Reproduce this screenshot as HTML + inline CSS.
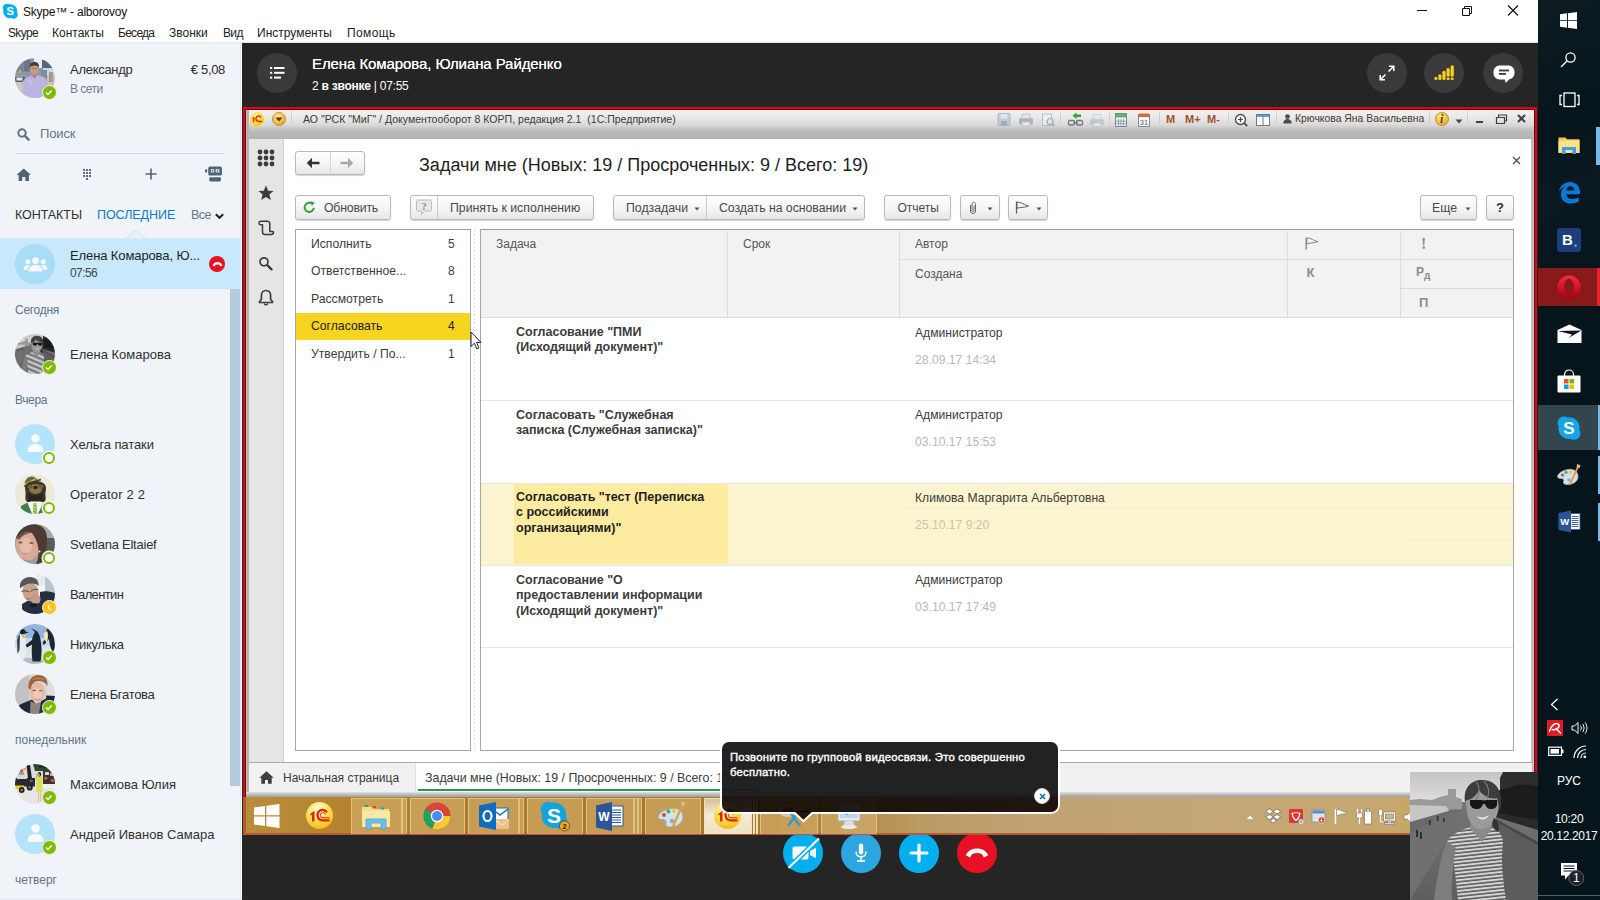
<!DOCTYPE html>
<html lang="ru">
<head>
<meta charset="utf-8">
<title>Skype</title>
<style>
*{box-sizing:border-box;margin:0;padding:0}
html,body{width:1600px;height:900px;overflow:hidden;background:#252525;font-family:"Liberation Sans",sans-serif;}
#root{position:relative;width:1600px;height:900px;overflow:hidden}
.a{position:absolute}
.t{position:absolute;white-space:nowrap;line-height:16px;font-size:13px;color:#2b2b2b}
svg{position:absolute;overflow:visible}
/* ---------- skype chrome ---------- */
#titlebar{left:0;top:0;width:1538px;height:43px;background:#fff;border-bottom:1px solid #dfe8ef}
#sidebar{left:0;top:43px;width:242px;height:857px;background:#f0f4f8;border-right:1px solid #fff}
#sidebar:after{content:"";position:absolute;left:240px;top:0;width:1px;height:857px;background:#dce8f2}
#sbw{left:0;top:1px;width:240px;height:856px}
.ck{margin-top:-1px}
.sec{font-size:12px;color:#5f7488;left:15px}
.nm{left:70px;font-size:13px;color:#303030}
.av{position:absolute;left:15px;margin-top:-1px;width:40px;height:40px;border-radius:50%;overflow:hidden}
.bd{position:absolute;margin-top:-2px;left:41.500px;width:15px;height:15px;border-radius:50%;background:#7fba00;border:1.5px solid #f0f4f8}
.bd.o{background:#fff;border:2px solid #7fba00;box-shadow:0 0 0 1.500px #f0f4f8;width:12px;height:12px;left:43px;margin-top:-.5px}
.avs{margin-top:0}
.bd.y{background:#fcc21b}
/* ---------- call area ---------- */
#call{left:242px;top:43px;width:1296px;height:857px;background:#252525}
.cb{position:absolute;width:40px;height:40px;border-radius:50%;background:#3a3a3a}
/* ---------- 1C ---------- */
#share{left:243px;top:107px;width:1294px;height:728px;background:#db0613}
#share2{left:245px;top:109px;width:1290px;height:724px;background:#5e0a12}
#onec{left:246px;top:110px;width:1288px;height:723px;background:#fff}
.btn{position:absolute;height:25px;top:195px;border:1px solid #b9b9b9;border-radius:3px;background:linear-gradient(#ffffff,#f3f3f3 60%,#e6e6e6);box-shadow:0 1px 1px rgba(0,0,0,.18);font-size:12px;color:#4a4a4a;line-height:23px;white-space:nowrap}
.c1{font-size:12px;color:#3c3c3c}
.au{font-size:12.150px;color:#3c3c3c}
.hd{font-size:12px;color:#555}
.dt{font-size:12.150px;color:#b9b9b9}
.tk{font-size:12.500px;font-weight:bold;color:#3b3b3b;line-height:15.300px;white-space:normal}
.tbx{top:798px;height:36px;background:rgba(214,178,112,.62);border:1px solid rgba(232,206,150,.75);border-bottom-color:rgba(226,150,110,.8)}
/* ---------- win taskbar ---------- */
#wtb{left:1538px;top:0;width:62px;height:900px;background:#06151b}
</style>
</head>
<body>
<div id="root">
<svg width="0" height="0" style="left:0;top:0"><defs><clipPath id="cc"><circle cx="20" cy="20" r="20"/></clipPath><filter id="bl" x="-5%" y="-5%" width="110%" height="110%"><feGaussianBlur stdDeviation=".45"/></filter></defs></svg>

<!-- ================= SKYPE TITLE + MENU ================= -->
<div id="titlebar" class="a">
  <svg style="left:2px;top:2.500px" width="16.500" height="17" viewBox="0 0 16 17" preserveAspectRatio="none"><path d="M8 1.2c3.8 0 6.8 3 6.8 6.8 0 .5 0 1-.2 1.400.5.700.700 1.500.700 2.300 0 2.200-1.800 4-4 4-.8 0-1.500-.2-2.100-.6-.4.100-.8.100-1.200.100-3.800 0-6.800-3-6.800-6.800 0-.5 0-1 .2-1.400C.9 6.300.700 5.500.700 4.700c0-2.200 1.800-4 4-4 .8 0 1.500.2 2.100.6.400-.1.800-.1 1.200-.1z" fill="#00aff0"/><text x="8" y="12.300" font-family="Liberation Sans" font-weight="bold" font-size="11" fill="#fff" text-anchor="middle">S</text></svg>
  <div class="t" style="left:23px;top:4px;font-size:12px;color:#111;letter-spacing:-.23px">Skype™ - alborovoy</div>
  <!-- window controls -->
  <svg style="left:1416px;top:4px" width="110" height="14" viewBox="0 0 110 14" fill="none" stroke="#111" stroke-width="1"><path d="M1 6.500h10"/><path d="M46.500 4.500h7v7h-7zM48.500 4.500v-2h7v7h-2"/><path d="M92 1.500l10 10M102 1.500l-10 10" stroke-width="1.200"/></svg>
  <div class="t" style="left:8px;top:25px;font-size:12px;color:#222;letter-spacing:-.68px">Skype</div>
  <div class="t" style="left:52px;top:25px;font-size:12px;color:#222">Контакты</div>
  <div class="t" style="left:118px;top:25px;font-size:12px;color:#222;letter-spacing:-.72px">Беседа</div>
  <div class="t" style="left:169px;top:25px;font-size:12px;color:#222">Звонки</div>
  <div class="t" style="left:223px;top:25px;font-size:12px;color:#222;letter-spacing:-.65px">Вид</div>
  <div class="t" style="left:257px;top:25px;font-size:12px;color:#222">Инструменты</div>
  <div class="t" style="left:347px;top:25px;font-size:12px;color:#222;letter-spacing:.4px">Помощь</div>
</div>

<!-- ================= LEFT SIDEBAR ================= -->
<div id="sidebar" class="a"><div id="sbw" class="a">
<!-- profile (coords relative to sidebar top=43) -->
<svg class="avs" style="left:15px;top:14px" width="40" height="40" viewBox="0 0 40 40"><g clip-path="url(#cc)"><g filter="url(#bl)"><rect width="40" height="40" fill="#8e9aaa"/>
<path d="M0 0h16v14H0z" fill="#7c8898"/><path d="M9 2h7v11H9z" fill="#6a768a"/>
<path d="M19 0h8.500v10H19z" fill="#e2f1fa"/><path d="M27 2h10v8H27z" fill="#56667e"/>
<path d="M28 10h12v9H28z" fill="#c6dbea"/><path d="M26 12h6v8h-6z" fill="#7f8c9c"/>
<path d="M0 19h10v6H0z" fill="#5a6068"/><path d="M1.500 19.500h6v3h-6z" fill="#e4e8ec"/><rect x="4" y="12" width="2" height="3" fill="#d8b040"/>
<path d="M0 24h12v16H0z" fill="#cfc6b8"/><path d="M32 17h8v12h-8z" fill="#c9c0b6"/><path d="M34 14h4v10h-4z" fill="#a89888"/>
<path d="M7.500 40V25c.5-3 2.500-5 5.500-6l5-2 1.600 3.500L22 17l5 1.500c3.500 1 5 3.500 6 8.500V40z" fill="#bab4e0"/>
<path d="M13 22l4 5M14 21l4 5" stroke="#d8d4f0" stroke-width=".7"/>
<path d="M17 15.500h4.800l.2 2-2.400 3.500-2.600-3.500z" fill="#b48670"/>
<ellipse cx="19.200" cy="11" rx="4.400" ry="5.600" fill="#c69c86"/>
<path d="M14.600 10c-.4-4 2-6 5-6s5 2 4.400 6c-.8-2-2-2.600-4.400-2.600S15.500 8 14.600 10z" fill="#493a30"/>
<path d="M16.500 10.500h5.500" stroke="#8a6a5a" stroke-width=".7"/></g></g></svg>
<div class="bd" style="top:43px"></div>
<svg class="ck" style="left:45px;top:46px" width="8" height="7" viewBox="0 0 8 7"><path d="M1 3.500l2 2 3.600-4" fill="none" stroke="#fff" stroke-width="1.400"/></svg>
<div class="t nm" style="top:18px;letter-spacing:-.28px">Александр</div>
<div class="t" style="left:70px;top:37px;font-size:12px;color:#6a7d90;letter-spacing:-.5px">В сети</div>
<div class="t" style="left:150px;width:75px;text-align:right;top:18px;color:#2a2a2a;letter-spacing:-.33px">€ 5,08</div>
<!-- search -->
<svg style="left:16.500px;top:83.500px" width="13" height="13" viewBox="0 0 13 13"><circle cx="5" cy="5" r="3.700" fill="none" stroke="#5d7286" stroke-width="2"/><path d="M7.900 7.900l3.700 3.700" stroke="#5d7286" stroke-width="2.500" stroke-linecap="round"/></svg>
<div class="t" style="left:40px;top:82px;color:#64778a;letter-spacing:-.15px">Поиск</div>
<div class="a" style="left:15px;top:109px;width:210px;height:1px;background:#c9dbe8"></div>
<!-- icon row y=174 abs => 131 rel -->
<svg style="left:15.500px;top:124px" width="15.500" height="14" viewBox="0 0 15 14" preserveAspectRatio="none"><path d="M7.500 0.500L0.500 7h2v6h3.500V9h3v4h3.500V7h2z" fill="#4f6479"/></svg>
<svg style="left:83px;top:125px" width="10" height="13" viewBox="0 0 10 13" fill="#5a6f84"><g><rect x="0" y="0" width="2" height="2"/><rect x="3" y="0" width="2" height="2"/><rect x="6" y="0" width="2" height="2"/><rect x="0" y="3" width="2" height="2"/><rect x="3" y="3" width="2" height="2"/><rect x="6" y="3" width="2" height="2"/><rect x="0" y="6" width="2" height="2"/><rect x="3" y="6" width="2" height="2"/><rect x="6" y="6" width="2" height="2"/><rect x="3" y="9" width="2" height="2"/></g></svg>
<svg style="left:145px;top:124px" width="12" height="12" viewBox="0 0 12 12"><path d="M6 0.500v11M0.500 6h11" stroke="#4f6479" stroke-width="1.600"/></svg>
<svg style="left:204px;top:122px" width="19" height="16" viewBox="0 0 18 15"><rect x="4" y="0.500" width="13" height="8.500" rx="1.500" fill="#4f6479"/><rect x="6.500" y="3" width="3" height="3" fill="#f0f4f8"/><rect x="11" y="3" width="3.500" height="3" fill="#f0f4f8"/><circle cx="8" cy="4.500" r=".8" fill="#4f6479"/><circle cx="12.800" cy="4.500" r=".8" fill="#4f6479"/><rect x="1" y="3" width="2" height="3" fill="#4f6479"/><rect x="5" y="10.500" width="11" height="4" rx="1" fill="#4f6479"/></svg>
<!-- tabs y=214 abs => 171 -->
<div class="t" style="left:15px;top:163px;font-size:12.500px;color:#2f2f2f;letter-spacing:-.07px">КОНТАКТЫ</div>
<div class="t" style="left:97px;top:163px;font-size:12.500px;color:#0a7bc6;letter-spacing:-.05px">ПОСЛЕДНИЕ</div>
<div class="t" style="left:191px;top:163px;font-size:12.500px;color:#62768a;letter-spacing:-.5px">Все</div>
<svg style="left:214.500px;top:168.500px" width="9" height="7" viewBox="0 0 9 7"><path d="M0.800 1.200l3.700 3.600L8.200 1.200" fill="none" stroke="#222" stroke-width="2"/></svg>
<!-- selected conversation: abs y 238-288 => rel 195-245 -->
<svg style="left:120px;top:185.500px" width="31" height="9" viewBox="0 0 31 9"><path d="M0 9C9 9 11.500 1 15.500 1S22 9 31 9z" fill="#e9f1f7" stroke="#d3e3ee" stroke-width="1"/></svg>
<div class="a" style="left:0;top:194px;width:240px;height:51px;background:#c7e9fb;border-top:1px solid #d4ecfa"></div>
<div class="av" style="top:201px;background:#a8dcf7"></div>
<svg style="left:23px;top:213px" width="25" height="15" viewBox="0 0 25 15" fill="#f4fbff"><circle cx="12.500" cy="3.600" r="3.400"/><path d="M5.500 14.500c0-4.500 3-6.500 7-6.500s7 2 7 6.500z"/><circle cx="4.800" cy="4.800" r="2.500"/><path d="M0.500 13c0-3.500 1.800-5 4.300-5 .9 0 1.600.2 2.200.5-1.700 1.200-2.400 2.800-2.500 4.500z"/><circle cx="20.200" cy="4.800" r="2.500"/><path d="M24.500 13c0-3.500-1.800-5-4.300-5-.9 0-1.600.2-2.200.5 1.700 1.200 2.400 2.800 2.500 4.500z"/></svg>
<div class="t nm" style="top:204px;color:#1f1f1f;letter-spacing:-.11px">Елена Комарова, Ю...</div>
<div class="t" style="left:70px;top:221px;font-size:12px;color:#3d4852;letter-spacing:-.6px">07:56</div>
<div class="a" style="left:209px;top:212px;width:16px;height:16px;border-radius:50%;background:#e81123"></div>
<svg style="left:211.500px;top:216.500px" width="11" height="6.600" viewBox="0 0 10 6"><path d="M0.500 4.200C1.500 1.800 3.200 1 5 1s3.500.8 4.500 3.200l-1.800.9-.9-1.600C6.200 3.300 5.600 3.200 5 3.200s-1.200.1-1.800.3l-.9 1.600z" fill="#fff"/></svg>
<!-- scrollbar -->
<div class="a" style="left:230px;top:245px;width:10px;height:497px;background:#b4cbdd"></div>

<div class="t sec" style="top:258px;letter-spacing:-.29px">Сегодня</div>
<svg class="avs" style="left:15px;top:290px" width="40" height="40" viewBox="0 0 40 40"><g clip-path="url(#cc)"><g transform="translate(-3 -1) scale(.345)" filter="url(#bl2)"><rect width="128" height="128" fill="url(#pv)"/>
 <rect width="128" height="30" fill="url(#sky)"/>
 <path d="M0 28l10-1 12 1 8-3 8-2v-6h8v8l6 2v10L0 40z" fill="#9a9a9a"/>
 <path d="M0 33l36 1 4 6-40 12z" fill="#c6c6c6"/>
 <path d="M0 50l42-12 10 0-52 30z" fill="#6a6a6a"/>
 <path d="M0 62l40-22h14L0 128z" fill="#6f6f6f"/>
 <path d="M93 0h35v22H90V6z" fill="#2e2e2e"/>
 <path d="M86 20c6-4 12-2 16-6 6-2 16-2 26 0v40l-42-12z" fill="#1d1d1d"/>
 <path d="M82 40l46 8v10l-46-14z" fill="#2a2a2a"/>
 <path d="M80 44l48 26v58H70z" fill="#5b5b5b"/>
 <path d="M84 46l44 24v3L83 48z" fill="#484848"/>
 <g fill="#2e2e2e"><rect x="6" y="58" width="2" height="7"/><rect x="10" y="60" width="2" height="7"/><rect x="19" y="48" width="1.600" height="5"/><rect x="27" y="44" width="1.500" height="5"/><rect x="33" y="46" width="1.500" height="4"/><rect x="94" y="41" width="1.600" height="5"/><rect x="99" y="42" width="1.600" height="5"/></g>
 <!-- woman -->
 <path d="M48 128c-2-20-4-40-8-54l-3-5c4-6 12-10 20-13l18-4 12 6c4 3 6 8 6 14-2 14-1 30 3 56z" fill="url(#st)"/>
 <path d="M37 69l9 7c-3 14-5 34-4 52H24c3-20 6-44 13-59z" fill="#7e7e7e"/>
 <path d="M62 44h18l2 12-10 14-12-14z" fill="#8a8a8a"/>
 <path d="M57 18c4-8 18-12 27-4 5 6 6 16 4 26l-3 8c-3 6-9 9-14 9-7 0-12-6-14-16-1-8-2-16 0-23z" fill="#9a9a9a"/>
 <path d="M55 30c-2-14 6-22 17-22 12 0 20 8 19 24l-1 8-3-14c-6 2-14-2-18-8-3 6-8 10-12 10z" fill="#3c3c3c"/>
 <path d="M66 10c4 4 4 12 0 18M74 9c5 5 6 12 3 18" stroke="#777" stroke-width="1.200" fill="none"/>
 <path d="M84 46c4 3 6 8 4 14-3-1-5-5-6-9z" fill="#333"/>
 <path d="M60 28h11c1 0 2 .5 3 .5s2-.5 3-.5h10v5c-1 3-3 4-6 4-3 0-5-2-6-5h-2c-1 3-3 5-6 5-4 0-6-2-7-5z" fill="#121212"/>
 <path d="M67 44c3 2 8 2 12-1-1 3-4 4.500-6.500 4.500S68 46 67 44z" fill="#e2e2e2"/></g></g></svg>
<div class="bd" style="top:318px"></div>
<svg class="ck" style="left:45px;top:321px" width="8" height="7" viewBox="0 0 8 7"><path d="M1 3.500l2 2 3.600-4" fill="none" stroke="#fff" stroke-width="1.400"/></svg>
<div class="t nm" style="top:303px">Елена Комарова</div>

<div class="t sec" style="top:348px;letter-spacing:-.38px">Вчера</div>
<div class="av" style="top:381px;background:#b5e3fa"></div>
<svg style="left:27px;top:390px" width="17" height="20" viewBox="0 0 17 20" fill="#f6fcff"><circle cx="8.500" cy="4.500" r="4.200"/><path d="M0.500 18c0-6 3.500-8 8-8s8 2 8 8z"/></svg>
<div class="bd o" style="top:408px"></div>
<div class="t nm" style="top:393px;letter-spacing:-.1px">Хельга патаки</div>

<svg class="avs" style="left:15px;top:430px" width="40" height="40" viewBox="0 0 40 40"><g clip-path="url(#cc)"><g filter="url(#bl)"><rect width="40" height="40" fill="#ece9d6"/>
<path d="M9.500 9.500c1-5 5-8 9.500-6.500 3 1 4 3 4 5z" fill="#6c6648"/>
<path d="M8.500 11.500L25.500 4.500l.8 1.800L9.500 13z" fill="#5a543c"/>
<path d="M10.500 10.200L20.500 5" stroke="#a8d428" stroke-width="1.500"/>
<path d="M10 13c0-3 4-6 10.500-6S31 10 31 14c0 3-1 5-.5 8s0 6-2 6H13c-2 0-3-3-2.500-6s-.5-6-.5-9z" fill="#3c3428"/>
<ellipse cx="20.500" cy="15" rx="6.500" ry="5" fill="#8a7448"/><ellipse cx="15" cy="12.500" rx="2.500" ry="2" fill="#6e5c3c"/><ellipse cx="26" cy="12.500" rx="2.500" ry="2" fill="#6e5c3c"/>
<ellipse cx="20.500" cy="13.500" rx="2.200" ry="1.700" fill="#26221c"/><path d="M13 19c4 3 11 3 15 0v8H13z" fill="#2a2620"/>
<path d="M7 40V33l5-3.500 3.500-2h10l3.500 2 5 3.500V40z" fill="#f4f6f2"/>
<path d="M6 40V32l6.500-3.500L17 40zM34 40v-7l-6-4-5 11z" fill="#3e8048"/>
<path d="M18.300 29h3.400l.5 11h-4.400z" fill="#b9c96a"/><path d="M18.500 31l3 1.500M18.500 34l3 1.500M18.300 37l3.500 1.500" stroke="#6a9a3a" stroke-width=".8"/></g></g></svg>
<div class="bd o" style="top:458px"></div>
<div class="t nm" style="top:443px;letter-spacing:.17px">Operator 2 2</div>

<svg class="avs" style="left:15px;top:480px" width="40" height="40" viewBox="0 0 40 40"><g clip-path="url(#cc)"><g filter="url(#bl)"><rect width="40" height="40" fill="#9c9c9c"/><path d="M30 14h10v14H30z" fill="#5a5a58"/><path d="M28 0h12v14H28z" fill="#a8a8a8"/>
<ellipse cx="13" cy="21.500" rx="12" ry="15" fill="#dba998"/><ellipse cx="11" cy="22" rx="6" ry="8" fill="#e6bcae"/>
<path d="M0 17C0 6 6 0 16 0c9 0 16 4 16 14 0 5-.5 9-1 13-1 5-3 10-6 13h-4c2-4 3-9 2.500-14C23 20 21 14 17 9 11 7 4 9 0 17z" fill="#4e3a30"/>
<path d="M2 14c3-5 8-7 15-5-5 0-10 2-13 7z" fill="#6a5040"/>
<ellipse cx="5.500" cy="18.500" rx="2.200" ry="1" fill="#7a5a50"/><ellipse cx="16.500" cy="19" rx="2.200" ry="1" fill="#7a5a50"/>
<path d="M6 28.500c2.500 1.200 5 1.200 7.500.3-1.500 1.700-5.500 2-7.500-.3z" fill="#c0686a"/><circle cx="24.500" cy="27.500" r="1" fill="#f0f0f0"/></g></g></svg>
<div class="bd o" style="top:508px"></div>
<div class="t nm" style="top:493px;letter-spacing:-.24px">Svetlana Eltaief</div>

<svg class="avs" style="left:15px;top:530px" width="40" height="40" viewBox="0 0 40 40"><g clip-path="url(#cc)"><g filter="url(#bl)"><rect width="40" height="40" fill="#f3f5f7"/><path d="M30 3h10v16H30z" fill="#b9c5c9"/><path d="M21 0h9v12h-9z" fill="#e6ecee"/>
<path d="M7 40V30l7-4 6 2 5-3V18c4-1.500 9-1 15 1v12l-8 6-6 3z" fill="#262e42"/>
<ellipse cx="15.500" cy="18" rx="8" ry="9.500" fill="#c9a18d" transform="rotate(-12 15.500 18)"/>
<path d="M5 14C4 7 9 3 15 3s9 3.500 8.500 9c-3-3-9-3-13-1S6 14 5 14z" fill="#58585a"/>
<path d="M6.500 17.500c3-1 5.500-1 7.500.3m1.500-.3c2.500-1.800 5-2.500 7.500-2" fill="none" stroke="#3c3c40" stroke-width=".9"/>
<path d="M16 21c3-2 7-1.500 9 1.500 1 2.500.5 5.500-1.500 7l-6-.5c-2-2-2.500-5-1.500-8z" fill="#c49c88"/>
<path d="M11 24.500c1.500.8 3 .8 4.500 0" stroke="#a05a58" stroke-width=".9" fill="none"/>
<rect x="15" y="30" width="7" height="3" rx="1" fill="#1c1e24"/></g></g></svg>
<div class="bd y" style="top:558px"></div>
<svg class="ck" style="left:45px;top:561px" width="8" height="8" viewBox="0 0 8 8"><path d="M3.600 1v3.200l2.200 1.600" fill="none" stroke="#fff" stroke-width="1.500"/></svg>
<div class="t nm" style="top:543px;letter-spacing:-.63px">Валентин</div>

<svg class="avs" style="left:15px;top:580px" width="40" height="40" viewBox="0 0 40 40"><g clip-path="url(#cc)"><g filter="url(#bl)"><rect width="40" height="40" fill="#dce4ea"/><rect width="40" height="14" fill="#8fb5e1"/><rect y="14" width="40" height="8" fill="#c4d9ef"/><rect y="34" width="40" height="6" fill="#b4bcc4"/>
<path d="M4 12c0-3 2-4 4-3.500s2.500 2 2.500 5l.5 14c0 4-1 7-3 8s-4-1-4.500-5z" fill="#e8ecf0"/>
<path d="M2 16c1-3 2-5 3-6l-.5 16-2 4z" fill="#3a4250"/>
<path d="M5 8.500c0-2 1.500-3.500 3-3.500s2.500 1.200 2.500 2.500l3.500 1-3.500.7C10 10 9 10.500 7.500 10.500S5 10 5 8.500z" fill="#1c222c"/>
<path d="M6.500 10.500c1-.5 2.500-.5 3 0 .5 1.500.3 3-.2 4.500-1.300-1.500-2.300-3-2.800-4.500z" fill="#f0b020"/>
<path d="M20.500 6.500l-4.500-2.500 4 4c-1.500 2-2.500 5-3 8l-6.500 5 1.500 2.500 5-3c-.5 5-.3 11 .5 17h8c1.500-7 1.500-15 0-22-.5-3-1.500-6-3-7.500-.5-1-1.200-1.400-2-1.500z" fill="#1c2630"/>
<path d="M31.500 7c0-1.800 1-3 2.500-3s2.500 1.200 2.500 2.500c1.500 2 2.500 5 3 9l1 12-3 .5c-2-4-3-8-3.500-13l-5 6-1.500-2 4.500-7c0-2-.3-3.500-.5-5z" fill="#1e2836"/>
<path d="M29.500 8.500c.8-1 2-1.200 3-.8.800 3 .5 7-.5 11-1.500-1-2.500-3-3-5.500s-.2-3.500.5-4.700z" fill="#f0e8c0"/>
<path d="M31 6.500l-3-.8 3 1.800z" fill="#e09030"/></g></g></svg>
<div class="bd" style="top:608px"></div>
<svg class="ck" style="left:45px;top:611px" width="8" height="7" viewBox="0 0 8 7"><path d="M1 3.500l2 2 3.600-4" fill="none" stroke="#fff" stroke-width="1.400"/></svg>
<div class="t nm" style="top:593px;letter-spacing:-.31px">Никулька</div>

<svg class="avs" style="left:15px;top:630px" width="40" height="40" viewBox="0 0 40 40"><g clip-path="url(#cc)"><g filter="url(#bl)"><rect width="40" height="40" fill="#d6d6d6"/><path d="M0 0h14v30H0z" fill="#c2c2c4"/><path d="M32 0h8v22h-8z" fill="#dedede"/>
<path d="M4 40V31l8-3.500 5-2 3.500 4L16 40zM31 21.500l9 .5v6l-8 2z" fill="#1e2638"/>
<path d="M15.500 27l5 2.500 5-1.500 2.500 6-2 6H15z" fill="#8e847c"/><path d="M26 27l6-3v8l-5 8h-3z" fill="#2a3040"/>
<ellipse cx="22.200" cy="18" rx="7.600" ry="9.800" fill="#e5b9a1"/><ellipse cx="23" cy="20" rx="4.500" ry="5.500" fill="#efc8b2"/>
<path d="M13.500 14C13 6 17 1 23.500 1S33 5 32.500 12c-2-3.500-5-5-9-5-4 0-7 2.500-8 9z" fill="#a2623c"/><path d="M17 6c3-3 9-3.500 13 0-4-1.500-9-1.500-13 0z" fill="#c08458"/>
<path d="M17.500 16.500h3.500M24 16.800h3.500" stroke="#6a4a3a" stroke-width=".9"/><path d="M19.500 24.500c2 1.200 4 1.200 6 0-1.500 2-4.500 2-6 0z" fill="#c26a66"/></g></g></svg>
<div class="bd" style="top:658px"></div>
<svg class="ck" style="left:45px;top:661px" width="8" height="7" viewBox="0 0 8 7"><path d="M1 3.500l2 2 3.600-4" fill="none" stroke="#fff" stroke-width="1.400"/></svg>
<div class="t nm" style="top:643px;letter-spacing:-.31px">Елена Бгатова</div>

<div class="t sec" style="top:688px">понедельник</div>
<svg class="avs" style="left:15px;top:720px" width="40" height="40" viewBox="0 0 40 40"><g clip-path="url(#cc)"><g filter="url(#bl)"><rect width="40" height="40" fill="#e6e6e6"/><path d="M0 0h40v14H0z" fill="#dcdcdc"/>
<path d="M18 0h16l2 7H20z" fill="#2a4a2c"/><path d="M24 0h9v4h-9z" fill="#1e3620"/>
<path d="M11.500 1h3.500l2 13.500h-4z" fill="#222"/>
<path d="M0 14h20v8.500H0z" fill="#2b2b2d"/><path d="M1.500 11h8.500l2 4H2z" fill="#d8dadc"/><path d="M4 8h5v3H4z" fill="#9aa0a6"/>
<rect x="5" y="5.400" width="3" height="2.400" fill="#d04040"/><rect x="8.500" y="4" width="2.500" height="2" fill="#e8a040"/>
<path d="M0 21.500h9v3.500H0z" fill="#e8d222"/><circle cx="6.700" cy="26" r="2.900" fill="#202022"/><circle cx="6.700" cy="26" r="1.200" fill="#8a8a8a"/><circle cx="14.700" cy="23.500" r="3.100" fill="#222224"/><circle cx="14.700" cy="23.500" r="1.300" fill="#777"/>
<rect x="15" y="16" width="2.600" height="1.800" fill="#2a9a7a"/>
<path d="M28 7h12v14H28z" fill="#3a3232"/><circle cx="30.800" cy="14.300" r="1.500" fill="#e06030"/><circle cx="37.300" cy="16.500" r="1.600" fill="#e06030"/><path d="M30 8h4v3h-4z" fill="#d8d8dc"/><path d="M35 9h4v3h-4z" fill="#c8a8a0"/>
<path d="M28 20h12v4H28z" fill="#f0f0f0"/>
<path d="M20.500 14.500c.5-1.200 1.500-1.700 3.500-1.700s3.300.6 3.800 1.700l-.6 4 .3 9.500c-2 .8-4.500.8-6.500 0l.3-9.500z" fill="#d9e252"/>
<path d="M20.500 14.500c-.6-1.800.3-3.500 2-4.500l.6 1.200c-1 .8-1.400 2-1 3.300z" fill="#e0b09a"/>
<ellipse cx="24.400" cy="10.300" rx="1.800" ry="2.400" fill="#3a2a26"/><ellipse cx="23.800" cy="11" rx="1" ry="1.400" fill="#d8a890"/>
<path d="M23 28.800h1.300l-.3 9.500h-1.200zM25 28.800h1.200l.3 8.500h-1z" fill="#e6b8a6"/></g></g></svg>
<div class="bd" style="top:748px"></div>
<svg class="ck" style="left:45px;top:751px" width="8" height="7" viewBox="0 0 8 7"><path d="M1 3.500l2 2 3.600-4" fill="none" stroke="#fff" stroke-width="1.400"/></svg>
<div class="t nm" style="top:733px">Максимова Юлия</div>

<div class="av" style="top:771px;background:#b5e3fa"></div>
<svg style="left:27px;top:780px" width="17" height="20" viewBox="0 0 17 20" fill="#f6fcff"><circle cx="8.500" cy="4.500" r="4.200"/><path d="M0.500 18c0-6 3.500-8 8-8s8 2 8 8z"/></svg>
<div class="bd" style="top:798px"></div>
<svg class="ck" style="left:45px;top:801px" width="8" height="7" viewBox="0 0 8 7"><path d="M1 3.500l2 2 3.600-4" fill="none" stroke="#fff" stroke-width="1.400"/></svg>
<div class="t nm" style="top:783px">Андрей Иванов Самара</div>

<div class="t sec" style="top:828px">четверг</div>
<div class="a" style="left:0;top:855px;width:242px;height:2px;background:#dde8f0"></div>

</div></div>

<!-- ================= CALL AREA ================= -->
<div id="call" class="a">
<!-- coords relative to call area (242,43) -->
<div class="cb" style="left:15px;top:10px"></div>
<svg style="left:28px;top:24px" width="15" height="12" viewBox="0 0 15 12" fill="#fff"><rect x="0" y="0" width="2.200" height="2"/><rect x="4" y="0" width="10.500" height="2"/><rect x="0" y="4.800" width="2.200" height="2"/><rect x="4" y="4.800" width="10.500" height="2"/><rect x="0" y="9.600" width="2.200" height="2"/><rect x="4" y="9.600" width="7" height="2"/></svg>
<div class="t" style="left:70px;top:12px;font-size:15px;line-height:18px;color:#fff;letter-spacing:-.08px;text-shadow:0 0 .6px #fff">Елена Комарова, Юлиана Райденко</div>
<div class="t" style="left:70px;top:35px;font-size:12px;color:#fff;letter-spacing:-.25px">2 <b>в звонке</b> | 07:55</div>
<!-- right buttons: centers abs (1387,73),(1444,73),(1502,73) -->
<div class="cb" style="left:1125px;top:10px"></div>
<svg style="left:1137px;top:22px" width="16" height="16" viewBox="0 0 16 16" fill="none" stroke="#fff" stroke-width="1.600"><path d="M9.500 6.500L14.500 1.500M10 1.200h4.800v4.800M6.500 9.500L1.500 14.500M1.200 10v4.800h4.800"/></svg>
<div class="cb" style="left:1182px;top:10px"></div>
<svg style="left:1192px;top:22px" width="21" height="16" viewBox="0 0 21 16" fill="#fcd116"><rect x="0.300" y="11.800" width="3.100" height="3.100" rx="1.500"/><rect x="4.300" y="9.200" width="3.200" height="5.700" rx="1.500"/><rect x="8.400" y="5.800" width="3.200" height="9.100" rx="1.500"/><rect x="12.500" y="3" width="3.200" height="8.700" rx="1.500"/><rect x="12.500" y="12.500" width="3.200" height="2.400" rx="1.100"/><rect x="16.600" y="0.200" width="3.200" height="11.500" rx="1.500"/><rect x="16.600" y="12.500" width="3.200" height="2.400" rx="1.100"/></svg>
<div class="cb" style="left:1241px;top:10px"></div>
<svg style="left:1250.500px;top:22px" width="22" height="19" viewBox="0 0 22 19"><path d="M7 0.500h8c3.600 0 6.500 2.700 6.500 6.200v1.600c0 3-2.200 5.400-5.200 6L12.800 18l-1-3.500H7c-3.600 0-6.500-2.700-6.500-6.200V6.700C.5 3.200 3.400.5 7 .5z" fill="#fff"/><rect x="6" y="4.600" width="10" height="1.800" fill="#3a3a3a"/><rect x="6" y="8" width="7" height="1.800" fill="#3a3a3a"/></svg>

<!-- bottom call controls: centers abs (803,853),(861,853),(919,853),(977,853) r=20 -->
<div class="a" style="left:541px;top:790px;width:40px;height:40px;border-radius:50%;background:#00aff0"></div>
<svg style="left:541px;top:790px" width="40" height="40" viewBox="0 0 40 40"><path d="M9.500 15.500c0-1.200.8-2 2-2h12c1.200 0 2 .8 2 2v9c0 1.200-.8 2-2 2h-12c-1.200 0-2-.8-2-2z" fill="#fff"/><path d="M27 18l6-3.200v10.400L27 22z" fill="#fff"/><path d="M6 34.500L35.500 6" stroke="#00aff0" stroke-width="5"/><path d="M5.500 35L36 5.500" stroke="#fff" stroke-width="2"/></svg>
<div class="a" style="left:599px;top:790px;width:40px;height:40px;border-radius:50%;background:#2ba6e0"></div>
<svg style="left:612px;top:799px" width="14" height="22" viewBox="0 0 14 22"><rect x="4.800" y="1.500" width="4.400" height="11" rx="2.200" fill="#fff"/><path d="M2 9.500c0 3.500 2 5.300 5 5.300s5-1.800 5-5.300" fill="none" stroke="#fff" stroke-width="1.400"/><path d="M7 14.800v3.700" stroke="#fff" stroke-width="1.500"/><path d="M3 19h8" stroke="#fff" stroke-width="1.700"/></svg>
<div class="a" style="left:657px;top:790px;width:40px;height:40px;border-radius:50%;background:#00aff0"></div>
<svg style="left:668px;top:801px" width="18" height="18" viewBox="0 0 18 18"><path d="M9 1v16M1 9h16" stroke="#fff" stroke-width="3.200" stroke-linecap="round"/></svg>
<div class="a" style="left:715px;top:790px;width:40px;height:40px;border-radius:50%;background:#e81123"></div>
<svg style="left:723px;top:804px" width="24" height="12" viewBox="0 0 24 12"><path d="M0.800 8.200C3 3.500 7.200 1.500 12 1.500s9 2 11.200 6.700l-4.200 2.300-2.200-3.600c-1.500-.6-3.100-.9-4.800-.9s-3.300.3-4.800.9L5 10.500z" fill="#fff"/></svg>

</div>

<!-- ================= SHARED SCREEN (1C) ================= -->
<div id="share" class="a"></div><div id="share2" class="a"></div>
<div id="onec" class="a">
<div class="a" style="left:-246px;top:-110px;width:1600px;height:900px">
<!-- ===== title bar 109-139 ===== -->
<div class="a" style="left:246px;top:110px;width:1288px;height:29px;background:linear-gradient(#fbe4e4 0,#f0f0f0 4%,#e9e9e9 25%,#d9d9d9 52%,#c8c8c8 63%,#bbbbbb 74%,#b1b1b1 100%)"></div>
<div class="a" style="left:246px;top:110px;width:3px;height:687px;background:linear-gradient(90deg,#f0cfcf 0,#a9a9a9 34%,#b9b9b9 100%)"></div>
<div class="a" style="left:1531px;top:139px;width:3px;height:658px;background:linear-gradient(90deg,#c6c6c6,#b0b0b0 60%,#f3d6d6)"></div>
<!-- logo -->
<div class="a" style="left:250px;top:112px;width:14px;height:14px;border-radius:50%;background:radial-gradient(circle at 40% 30%,#fff7a0,#ffd91a 55%,#f0b400)"></div>
<svg style="left:250px;top:112px" width="14" height="14" viewBox="0 0 27 27"><path d="M4.500 11.800l4-3V19.500H6V12.800l-1.500 1z" fill="#e0231c"/><path d="M21 10.300a5.200 5.200 0 1 0-4.300 8h6.800" fill="none" stroke="#e0231c" stroke-width="2.800"/></svg>
<div class="a" style="left:272px;top:112px;width:14px;height:14px;border-radius:50%;background:radial-gradient(circle at 40% 30%,#ffe9a0,#f3b93a 60%,#d9962a);border:1px solid #c98f2a"></div>
<svg style="left:275px;top:117px" width="8" height="5" viewBox="0 0 8 5"><path d="M0.500 0.500h7L4 4.500z" fill="#4a3a20"/></svg>
<div class="a" style="left:291px;top:111px;width:1px;height:17px;background:#cfcfcf"></div>
<div class="t" style="left:303px;top:111px;font-size:10.550px;color:#3a3a3a;white-space:pre">АО "РСК "МиГ" / Документооборот 8 КОРП, редакция 2.1  (1С:Предприятие)</div>
<!-- toolbar icons -->
<svg style="left:996px;top:111px" width="270" height="18" viewBox="0 0 270 18">
 <g opacity=".75">
 <rect x="2" y="2.500" width="12" height="12" rx="1" fill="#b9c4cf" stroke="#9aa8b6"/><rect x="4.500" y="3" width="7" height="4.500" fill="#dfe6ec"/><rect x="5" y="10" width="6" height="4.500" fill="#8e9dac"/>
 <rect x="23" y="7" width="14" height="6.500" rx="1.500" fill="#9aa6b2"/><rect x="26" y="3" width="8" height="4.500" fill="#dfe5ea" stroke="#a3afba" stroke-width=".8"/><rect x="26" y="11" width="8" height="4" fill="#e9edf0" stroke="#a3afba" stroke-width=".8"/>
 <rect x="46.500" y="3" width="9" height="11.500" fill="#eef1f4" stroke="#a7b2bd"/><circle cx="54" cy="10.500" r="3" fill="#dfe6ec" stroke="#8795a3" stroke-width="1.200"/><path d="M56 12.800l2.200 2.200" stroke="#8795a3" stroke-width="1.600"/>
 </g>
 <path d="M64.500 1v16" stroke="#cfcfcf"/>
 <path d="M76 3.500h4.500v-2l4 3.200-4 3.200v-2H76z" fill="#2fa43a" transform="rotate(180 80.500 4.700)"/><rect x="72.500" y="9.500" width="6" height="4.500" rx="1.200" fill="none" stroke="#6d7a86" stroke-width="1.300"/><rect x="80.500" y="9.500" width="6" height="4.500" rx="1.200" fill="none" stroke="#6d7a86" stroke-width="1.300"/><path d="M77 11.800h5" stroke="#6d7a86" stroke-width="1.300"/>
 <g opacity=".55"><rect x="94" y="8" width="14" height="6" rx="1.500" fill="#aab4be"/><rect x="97" y="3.500" width="8" height="5" fill="#e4e9ed" stroke="#a9b3bd" stroke-width=".8"/><rect x="97" y="12" width="8" height="3.500" fill="#eef1f3" stroke="#a9b3bd" stroke-width=".8"/></g>
 <path d="M113.500 1v16" stroke="#cfcfcf"/>
 <rect x="119.500" y="2.500" width="11" height="13" fill="#f4f6f7" stroke="#7d8a96"/><rect x="120" y="3" width="10" height="3.500" fill="#56b85c"/><path d="M122.500 8v7M125 8v7M127.500 8v7M120 10.200h10M120 12.600h10" stroke="#8c98a4" stroke-width=".9"/>
 <rect x="142.500" y="3.500" width="11" height="12" fill="#f6f7f8" stroke="#7d8a96"/><rect x="143" y="2.500" width="10" height="3.500" fill="#d9683a"/><text x="148" y="13.500" font-family="Liberation Sans" font-size="7.500" fill="#5a6672" text-anchor="middle">31</text>
 <path d="M163.500 1v16" stroke="#cfcfcf"/>
 <text x="170" y="11.700" font-family="Liberation Sans" font-size="11" font-weight="bold" fill="#a5522a">M</text>
 <text x="189" y="11.700" font-family="Liberation Sans" font-size="11" font-weight="bold" fill="#a5522a">M+</text>
 <text x="211" y="11.700" font-family="Liberation Sans" font-size="11" font-weight="bold" fill="#a5522a">M-</text>
 <path d="M232.500 1v16" stroke="#cfcfcf"/>
 <circle cx="244.500" cy="8.500" r="5" fill="#f7f7f7" stroke="#4a4a4a" stroke-width="1.300"/><path d="M242 8.500h5M244.500 6v5" stroke="#4a4a4a" stroke-width="1.200"/><path d="M248.200 12.200l3 3" stroke="#4a4a4a" stroke-width="1.800"/>
 <rect x="260.500" y="3.500" width="13" height="11" fill="#fff" stroke="#6d7a86"/><rect x="261" y="4" width="12" height="2" fill="#58a6e6"/><path d="M267 4v10.500" stroke="#6d7a86"/>
</svg>
<div class="a" style="left:1276px;top:111px;width:1px;height:17px;background:#cfcfcf"></div>
<svg style="left:1283px;top:114px" width="9" height="10" viewBox="0 0 9 10" fill="#4d4d4d"><circle cx="4.500" cy="2.600" r="2.400"/><path d="M0.300 9.500c0-3 1.700-4.500 4.200-4.500s4.200 1.500 4.200 4.500z"/></svg>
<div class="t" style="left:1295px;top:111px;font-size:10.400px;color:#46382c">Крючкова Яна Васильевна</div>
<div class="a" style="left:1429px;top:111px;width:1px;height:17px;background:#cfcfcf"></div>
<div class="a" style="left:1435px;top:112px;width:14px;height:14px;border-radius:50%;background:radial-gradient(circle at 40% 30%,#ffe9a0,#f3b93a 60%,#d9962a);border:1px solid #c98f2a"></div>
<div class="t" style="left:1440px;top:111px;font-family:'Liberation Serif',serif;font-size:12px;font-weight:bold;font-style:italic;color:#5a3d12">i</div>
<svg style="left:1455px;top:119px" width="8" height="5" viewBox="0 0 8 5"><path d="M0.500 0.500h7L4 4.500z" fill="#4a4a4a"/></svg>
<div class="a" style="left:1467px;top:111px;width:1px;height:17px;background:#cfcfcf"></div>
<svg style="left:1474px;top:112px" width="54" height="14" viewBox="0 0 54 14" fill="none" stroke="#3f3f3f"><path d="M2 10h7" stroke-width="2"/><path d="M22.500 5.500h8v6h-8zM24.500 5.500v-2.500h8v6h-2" stroke-width="1.200"/><path d="M44 3l7 7M51 3l-7 7" stroke-width="2"/></svg>

<!-- ===== left icon sidebar ===== -->
<div class="a" style="left:249px;top:139px;width:35px;height:623px;background:#e5e5e5;border-right:1px solid #d2d2d2"></div>
<svg style="left:257px;top:149px" width="18" height="18" viewBox="0 0 18 18" fill="#3c3c3c"><circle cx="3" cy="3" r="2.400"/><circle cx="9" cy="3" r="2.400"/><circle cx="15" cy="3" r="2.400"/><circle cx="3" cy="9" r="2.400"/><circle cx="9" cy="9" r="2.400"/><circle cx="15" cy="9" r="2.400"/><circle cx="3" cy="15" r="2.400"/><circle cx="9" cy="15" r="2.400"/><circle cx="15" cy="15" r="2.400"/></svg>
<svg style="left:258px;top:185px" width="16" height="16" viewBox="0 0 16 16"><path d="M8 0.500l2.200 5.200 5.300.4-4.100 3.500 1.400 5.400L8 12l-4.800 3 1.400-5.400L.5 6.100l5.300-.4z" fill="#3c3c3c"/></svg>
<svg style="left:258px;top:220px" width="17" height="16" viewBox="0 0 17 16" fill="none" stroke="#3c3c3c" stroke-width="1.500"><path d="M4.500 4.800V12c0 1.400 1 2.400 2.300 2.400h6.400c1.300 0 2.300-1 2.300-2.200 0-.5-.3-.8-.8-.8h-2.900V3.600c0-1.300-1-2.300-2.300-2.300H3.100c-1.200 0-2.100.8-2.100 1.900 0 1 .7 1.600 1.700 1.600h1.800z" stroke-linejoin="round"/></svg>
<svg style="left:258px;top:256px" width="16" height="15" viewBox="0 0 16 15"><circle cx="6" cy="5.800" r="4" fill="none" stroke="#3c3c3c" stroke-width="1.700"/><path d="M9.200 9l4.300 4.300" stroke="#3c3c3c" stroke-width="2.400" stroke-linecap="round"/></svg>
<svg style="left:258px;top:289px" width="16" height="17" viewBox="0 0 16 17"><path d="M8 1.500c-3 0-4.600 2.300-4.600 5.200v3.500L1.500 12.800v.7h13v-.7l-1.900-2.600V6.700C12.600 3.800 11 1.500 8 1.500z" fill="#e5e5e5" stroke="#3c3c3c" stroke-width="1.700" stroke-linejoin="round"/><path d="M6.300 14.500c.3.900.9 1.400 1.700 1.400s1.400-.5 1.700-1.400" fill="none" stroke="#3c3c3c" stroke-width="1.400"/></svg>

<!-- ===== nav + title ===== -->
<div class="btn" style="left:295px;top:151px;width:70px;height:24px"></div>
<div class="a" style="left:330px;top:152px;width:1px;height:22px;background:#d5d5d5"></div>
<svg style="left:306px;top:157px" width="14" height="12" viewBox="0 0 14 12"><path d="M6 0.800L0.800 6 6 11.200V7.200h7.500V4.800H6z" fill="#333"/></svg>
<svg style="left:340px;top:157px" width="14" height="12" viewBox="0 0 14 12"><path d="M8 0.800L13.200 6 8 11.200V7.200H0.500V4.800H8z" fill="#a9a9a9"/></svg>
<div class="t" style="left:419px;top:154px;font-size:18px;line-height:22px;color:#1e1e1e">Задачи мне (Новых: 19 / Просроченных: 9 / Всего: 19)</div>
<svg style="left:1512px;top:156px" width="9" height="9" viewBox="0 0 9 9"><path d="M1 1l7 7M8 1l-7 7" stroke="#444" stroke-width="1.100"/></svg>

<!-- ===== command bar 195-220 ===== -->
<div class="btn" style="left:295px;width:96px"></div>
<svg style="left:303px;top:201px" width="13" height="13" viewBox="0 0 13 13"><path d="M10.800 6.800A4.600 4.600 0 1 1 8.600 2.400" fill="none" stroke="#2fa83a" stroke-width="2"/><path d="M7.300 0.200l4.400 1.300-2.800 3.500z" fill="#2fa83a"/></svg>
<div class="t" style="left:324px;top:200px;font-size:12.300px;color:#4a4a4a;letter-spacing:-.2px">Обновить</div>
<div class="btn" style="left:410px;width:184px"></div>
<div class="a" style="left:437px;top:196px;width:1px;height:23px;background:#cdcdcd"></div>
<svg style="left:416px;top:199px" width="16" height="17" viewBox="0 0 16 17"><path d="M2 1h12c.8 0 1.500.7 1.500 1.500v8c0 .8-.7 1.500-1.500 1.500H8.500l-3 3.500v-3.500H2c-.8 0-1.500-.7-1.500-1.500v-8C.5 1.700 1.200 1 2 1z" fill="#e8e8e8" stroke="#bdbdbd"/><text x="8" y="10.500" font-family="Liberation Serif" font-size="10.500" font-weight="bold" fill="#8a8a8a" text-anchor="middle">?</text></svg>
<div class="t" style="left:450px;top:200px;font-size:12.300px;color:#4a4a4a">Принять к исполнению</div>
<div class="btn" style="left:613px;width:252px"></div>
<div class="a" style="left:706px;top:196px;width:1px;height:23px;background:#cdcdcd"></div>
<div class="t" style="left:626px;top:200px;font-size:12.300px;color:#4a4a4a">Подзадачи</div>
<svg style="left:694px;top:207px" width="6" height="4" viewBox="0 0 6 4"><path d="M0.500 0.500h5L3 3.500z" fill="#555"/></svg>
<div class="t" style="left:719px;top:200px;font-size:12.300px;color:#4a4a4a;letter-spacing:-.03px">Создать на основании</div>
<svg style="left:852px;top:207px" width="6" height="4" viewBox="0 0 6 4"><path d="M0.500 0.500h5L3 3.500z" fill="#555"/></svg>
<div class="btn" style="left:884px;width:67px"></div>
<div class="t" style="left:897.500px;top:200px;font-size:12px;color:#4a4a4a">Отчеты</div>
<div class="btn" style="left:960px;width:40px"></div>
<svg style="left:969px;top:201px" width="8" height="14" viewBox="0 0 8 14" fill="none" stroke="#5a5a5a" stroke-width=".9"><path d="M1.500 4v6c0 1.500 1 2.500 2.500 2.500s2.500-1 2.500-2.500V3.200C6.500 2 5.700 1.200 4.700 1.200S3 2 3 3.200v6.300c0 .6.400 1 1 1s1-.4 1-1V4.500"/></svg>
<svg style="left:987px;top:207px" width="6" height="4" viewBox="0 0 6 4"><path d="M0.500 0.500h5L3 3.500z" fill="#555"/></svg>
<div class="btn" style="left:1008px;width:40px"></div>
<svg style="left:1015px;top:201px" width="15" height="13" viewBox="0 0 15 13"><path d="M1.500 0.500v12" stroke="#6a5a56" stroke-width="1.300"/><path d="M2 1.500c3-1.200 5 1.500 11.500 3.500-3 1.500-6.500 1-11.500 2.200z" fill="#f6f6f6" stroke="#6a5a56" stroke-width="1"/></svg>
<svg style="left:1036px;top:207px" width="6" height="4" viewBox="0 0 6 4"><path d="M0.500 0.500h5L3 3.500z" fill="#555"/></svg>
<div class="btn" style="left:1420px;width:57px"></div>
<div class="t" style="left:1432px;top:200px;font-size:12.300px;color:#4a4a4a">Еще</div>
<svg style="left:1465px;top:207px" width="6" height="4" viewBox="0 0 6 4"><path d="M0.500 0.500h5L3 3.500z" fill="#555"/></svg>
<div class="btn" style="left:1486px;width:28px"></div>
<div class="t" style="left:1496px;top:200px;font-size:13px;font-weight:bold;color:#2e2e2e">?</div>

<!-- ===== left list 295-470 x 230-750 ===== -->
<div class="a" style="left:295px;top:229px;width:176px;height:522px;border:1px solid #a6a6a6;border-top-color:#9a9a9a;background:#fff"></div>
<div class="a" style="left:296px;top:313px;width:174px;height:27px;background:#f6d420"></div>
<div class="t c1" style="left:311px;top:236px;font-size:12.200px">Исполнить</div><div class="t c1" style="left:448px;top:236px">5</div>
<div class="t c1" style="left:311px;top:263px;font-size:12.200px">Ответственное...</div><div class="t c1" style="left:448px;top:263px">8</div>
<div class="t c1" style="left:311px;top:291px;font-size:12.200px">Рассмотреть</div><div class="t c1" style="left:448px;top:291px">1</div>
<div class="t c1" style="left:311px;top:318px;color:#222;font-size:12.200px">Согласовать</div><div class="t c1" style="left:448px;top:318px;color:#222">4</div>
<div class="t c1" style="left:311px;top:346px;font-size:12.200px">Утвердить / По...</div><div class="t c1" style="left:448px;top:346px">1</div>
<!-- splitter -->
<div class="a" style="left:474px;top:230px;width:1px;height:521px;background:repeating-linear-gradient(#e2e2e2 0,#e2e2e2 2px,#fff 2px,#fff 4px)"></div>

<!-- ===== table 480-1514 x 230-750 ===== -->
<div class="a" style="left:480px;top:229px;width:1034px;height:522px;border:1px solid #a6a6a6;border-top-color:#9a9a9a;background:#fff"></div>
<div class="a" style="left:481px;top:230px;width:1032px;height:88px;background:#f2f2f2;border-bottom:1px solid #dadada"></div>
<div class="a" style="left:727px;top:231px;width:1px;height:86px;background:#dcdcdc"></div>
<div class="a" style="left:899px;top:231px;width:1px;height:86px;background:#dcdcdc"></div>
<div class="a" style="left:1287px;top:231px;width:1px;height:86px;background:#dcdcdc"></div>
<div class="a" style="left:1400px;top:231px;width:1px;height:86px;background:#dcdcdc"></div>
<div class="a" style="left:900px;top:259px;width:613px;height:1px;background:#dcdcdc"></div>
<div class="a" style="left:1401px;top:288px;width:112px;height:1px;background:#dcdcdc"></div>
<div class="t hd" style="left:496px;top:236px">Задача</div>
<div class="t hd" style="left:743px;top:236px">Срок</div>
<div class="t hd" style="left:915px;top:236px">Автор</div>
<div class="t hd" style="left:915px;top:266px">Создана</div>
<svg style="left:1305px;top:237px" width="14" height="13" viewBox="0 0 14 13"><path d="M1.200 0.500v12" stroke="#7a7070" stroke-width="1.200"/><path d="M1.800 1.400c3-1.200 4.500 1.300 11 3.200-3 1.400-6 1-11 2.100z" fill="#f4f4f4" stroke="#7a7070" stroke-width=".9"/></svg>
<div class="t" style="left:1306.500px;top:265px;font-size:13px;font-weight:bold;color:#8c8c8c">К</div>
<div class="t" style="left:1421px;top:236px;font-family:'Liberation Serif',serif;font-size:16px;font-weight:bold;color:#8c8c8c">!</div>
<div class="t" style="left:1416px;top:264px;font-size:12px;font-weight:bold;color:#8c8c8c">Р<span style="font-size:10px;position:relative;top:3px">д</span></div>
<div class="t" style="left:1419px;top:295px;font-size:13px;font-weight:bold;color:#8c8c8c">П</div>
<!-- rows -->
<div class="a" style="left:481px;top:400px;width:1032px;height:1px;background:#e6e6e6"></div>
<div class="a" style="left:481px;top:483px;width:1032px;height:1px;background:#e6e6e6"></div>
<div class="a" style="left:481px;top:484px;width:1032px;height:81px;background:#fcf4cf"></div>
<div class="a" style="left:514px;top:484px;width:214px;height:80px;background:#fdeb9f"></div>
<div class="a" style="left:481px;top:565px;width:1032px;height:1px;background:#e6e6e6"></div>
<div class="a" style="left:481px;top:647px;width:1032px;height:1px;background:#e6e6e6"></div>
<div class="a" style="left:900px;top:510px;width:613px;height:1px;background:#fdf8e0"></div>
<div class="a" style="left:1401px;top:537px;width:112px;height:1px;background:#fdf8e0"></div>

<div class="t tk" style="left:516px;top:325px;width:205px">Согласование "ПМИ<br>(Исходящий документ)"</div>
<div class="t au" style="left:915px;top:325px">Администратор</div>
<div class="t dt" style="left:915px;top:352px">28.09.17 14:34</div>
<div class="t tk" style="left:516px;top:408px;width:205px">Согласовать "Служебная<br>записка (Служебная записка)"</div>
<div class="t au" style="left:915px;top:407px">Администратор</div>
<div class="t dt" style="left:915px;top:434px">03.10.17 15:53</div>
<div class="t tk" style="left:516px;top:490px;width:205px;color:#1e1e1e">Согласовать "тест (Переписка<br>с российскими<br>организациями)"</div>
<div class="t au" style="left:915px;top:490px">Климова Маргарита Альбертовна</div>
<div class="t dt" style="left:915px;top:517px;color:#c9c4ae">25.10.17 9:20</div>
<div class="t tk" style="left:516px;top:573px;width:205px">Согласование "О<br>предоставлении информации<br>(Исходящий документ)"</div>
<div class="t au" style="left:915px;top:572px">Администратор</div>
<div class="t dt" style="left:915px;top:599px">03.10.17 17:49</div>
<!-- cursor -->
<svg style="left:470px;top:331px" width="12" height="19" viewBox="0 0 12 19"><path d="M1 1v14.500l3.400-3.300 2.300 5.600 2.200-.9-2.300-5.500H11z" fill="#fff" stroke="#222" stroke-width="1"/></svg>

<!-- ===== bottom tab bar 762-797 ===== -->
<div class="a" style="left:249px;top:762px;width:1283px;height:31px;background:#f1f1f1;border-top:1px solid #a9a9a9"></div>
<div class="a" style="left:246px;top:792px;width:1289px;height:5px;background:linear-gradient(#e2e2e2,#b5b5b5 60%,#a2a2a2)"></div>
<div class="a" style="left:415px;top:763px;width:346px;height:29px;background:#fff;border-left:1px solid #dedede"></div>
<div class="a" style="left:418px;top:789px;width:340px;height:2px;background:#2c9456"></div>
<svg style="left:259px;top:771px" width="15" height="13" viewBox="0 0 15 13"><path d="M7.500 0.300L0.300 6.800h2v6h3.700V9h3v3.800h3.700v-6h2z" fill="#3e3e3e"/></svg>
<div class="t" style="left:283px;top:770px;font-size:12px;color:#3a3a3a">Начальная страница</div>
<div class="t" style="left:425px;top:770px;font-size:12.400px;color:#3a3a3a">Задачи мне (Новых: 19 / Просроченных: 9 / Всего: 19)</div>
<svg style="left:742px;top:773px" width="8" height="8" viewBox="0 0 8 8"><path d="M1 1l6 6M7 1l-6 6" stroke="#555" stroke-width="1.200"/></svg>

<!-- ===== remote windows taskbar 797-835 ===== -->
<div class="a" style="left:243px;top:797px;width:1294px;height:38px;background:#b85a30"></div>
<div class="a" style="left:246px;top:797px;width:1288px;height:36px;background:linear-gradient(90deg,#b98c3c 0,#b4832e 8%,#ab7a28 22%,#a97928 36%,#ae8336 44%,#ba9a62 52%,#c0a272 60%,#c4a776 75%,#c6a770 88%,#cfa54a 96%,#dba832 100%)"></div>
<!-- start -->
<svg style="left:254px;top:804px" width="26" height="24" viewBox="0 0 26 24" fill="#fff"><path d="M0 3.500l11-1.600v9.400H0zM12.300 1.700L25.500 0v11.300H12.300zM0 12.500h11v9.500L0 20.500zM12.300 12.500h13.200V24l-13.200-1.800z"/></svg>
<!-- 1C pinned -->
<div class="a" style="left:306px;top:802px;width:27px;height:27px;border-radius:50%;background:radial-gradient(circle at 45% 25%,#fffbd0 0,#ffe86a 35%,#f6c21e 75%,#e0a018 100%)"></div>
<svg style="left:306px;top:802px" width="27" height="27" viewBox="0 0 27 27"><path d="M4.500 11.800l4-3V19.500H6V12.800l-1.500 1z" fill="#e0231c"/><path d="M21 10.300a5.200 5.200 0 1 0-4.300 8h6.800" fill="none" stroke="#e0231c" stroke-width="2.300"/><path d="M19.500 12.500a2.600 2.600 0 1 0-2.600 3.300h6.600" fill="none" stroke="#e0231c" stroke-width="1"/></svg>
<!-- item boxes -->
<div class="a tbx" style="left:351px;width:51px"></div><div class="a tbx" style="left:402px;width:5px"></div>
<div class="a tbx" style="left:410px;width:55px"></div>
<div class="a tbx" style="left:468px;width:51px"></div><div class="a tbx" style="left:519px;width:5px"></div>
<div class="a tbx" style="left:527px;width:56px"></div>
<div class="a tbx" style="left:586px;width:48px"></div><div class="a tbx" style="left:634px;width:4px"></div><div class="a tbx" style="left:638px;width:4px"></div>
<div class="a tbx" style="left:645px;width:56px"></div>
<div class="a" style="left:704px;top:798px;width:48px;height:36px;background:linear-gradient(#d9c092,#f3ead6 45%,#efe2c4 100%);border:1px solid #f0e2c0"></div><div class="a" style="left:753px;top:798px;width:2px;height:36px;background:#efe2c4"></div><div class="a" style="left:756px;top:798px;width:2px;height:36px;background:#efe2c4"></div>
<div class="a tbx" style="left:760px;width:58px"></div>
<div class="a tbx" style="left:821px;width:56px"></div>
<!-- explorer -->
<svg style="left:361px;top:802px" width="30" height="28" viewBox="0 0 30 28"><path d="M1 5h9l2 2h16v18H1z" fill="#f4dd8e"/><path d="M1 9h28v16H1z" fill="#f9e9a8"/><rect x="4" y="3" width="3" height="2" fill="#3aa845"/><rect x="12" y="4" width="3" height="2" fill="#d9413a"/><rect x="20" y="5.500" width="3" height="2" fill="#3a8fd9"/><path d="M5 17h20v10h-5v-6h-10v6H5z" fill="#6fc0ea" stroke="#4aa3d6" stroke-width=".8"/></svg>
<!-- chrome -->
<svg style="left:423px;top:802px" width="28" height="28" viewBox="0 0 28 28"><circle cx="14" cy="14" r="13.500" fill="#dc4437"/><path d="M14 14L2.300 7.300A13.500 13.500 0 0 0 9.500 26.700z" fill="#1da261"/><path d="M14 14l-4.500 12.700A13.500 13.500 0 0 0 27.500 14z" fill="#fcc934"/><path d="M14 14h13.500A13.500 13.500 0 0 0 25.700 7.300z" fill="#dc4437"/><circle cx="14" cy="14" r="6.300" fill="#fff"/><circle cx="14" cy="14" r="5" fill="#4a8af4"/></svg>
<!-- outlook -->
<svg style="left:478px;top:802px" width="32" height="29" viewBox="0 0 32 29"><rect x="14" y="6" width="16" height="13" fill="#fff" stroke="#1a6fc4"/><path d="M14 7l8 6 8-6" fill="none" stroke="#1a6fc4" stroke-width="1.500"/><rect x="17" y="17" width="14" height="10" fill="#ecc08a"/><path d="M17 18l7 5 7-5" fill="none" stroke="#f6dcb8" stroke-width="1.300"/><path d="M1 3.500L18 0v28L1 24.500z" fill="#0f6cbd"/><ellipse cx="9.500" cy="14" rx="4" ry="5" fill="none" stroke="#fff" stroke-width="2.200"/></svg>
<!-- skype -->
<svg style="left:540px;top:801px" width="32" height="32" viewBox="0 0 32 32"><path d="M14 1.500c6.800 0 12.300 5.300 12.300 12 0 .9-.1 1.800-.3 2.600.8 1.200 1.300 2.700 1.300 4.200 0 4.200-3.400 7.600-7.600 7.600-1.400 0-2.800-.4-3.900-1.100-.6.100-1.200.100-1.800.100-6.800 0-12.300-5.300-12.300-12 0-.9.100-1.700.3-2.500C1.200 11.200.7 9.800.7 8.300.7 4.100 4.100.7 8.300.7c1.500 0 2.800.4 4 1.100.5-.2 1.100-.3 1.700-.3z" fill="#13a3dd"/><text x="14" y="21.500" font-family="Liberation Sans" font-weight="bold" font-size="21" fill="#fff" text-anchor="middle">S</text><circle cx="24.500" cy="25" r="5" fill="#f5a81c" stroke="#3a3020" stroke-width=".6"/><text x="24.500" y="28" font-family="Liberation Sans" font-weight="bold" font-size="7.500" fill="#2a2010" text-anchor="middle">2</text></svg>
<!-- word -->
<svg style="left:595px;top:802px" width="30" height="29" viewBox="0 0 30 29"><rect x="13" y="4" width="15" height="20" fill="#fff" stroke="#2a5699"/><path d="M17 8h9M17 10.500h9M17 13h9M17 15.500h9M17 18h9M17 20.500h9" stroke="#2a5699" stroke-width="1.100"/><path d="M1 3.500L17 0v29L1 25.500z" fill="#2a5699"/><text x="9" y="19" font-family="Liberation Sans" font-weight="bold" font-size="12" fill="#fff" text-anchor="middle">W</text></svg>
<!-- paint -->
<svg style="left:656px;top:800px" width="32" height="32" viewBox="0 0 32 32"><path d="M13 9c7-2.500 14 1 14 8 0 6-6 10-13 10-4 0-5-2-4-4 1-2.200-1-3.500-4-3.500C2 19.500 1 17 3.500 14c2-2.500 5.500-4 9.500-5z" fill="#cfe3f0" stroke="#8fb0c8"/><circle cx="8" cy="15" r="2" fill="#e0483a"/><circle cx="12.500" cy="11.500" r="2" fill="#4caf50"/><circle cx="18" cy="11" r="2" fill="#f5c518"/><circle cx="16" cy="21" r="2.300" fill="#9ab"/><path d="M26 3L16 26l2 1L28 4z" fill="#e89a3c"/><path d="M25.500 1l3.500 1.500-1 3.500-3-1.300z" fill="#d8b89a"/></svg>
<!-- 1C active -->
<div class="a" style="left:714px;top:802px;width:27px;height:27px;border-radius:50%;background:radial-gradient(circle at 45% 25%,#fffbd0 0,#ffe86a 35%,#f6c21e 75%,#e0a018 100%)"></div>
<svg style="left:714px;top:802px" width="27" height="27" viewBox="0 0 27 27"><path d="M4.500 11.800l4-3V19.500H6V12.800l-1.500 1z" fill="#e0231c"/><path d="M21 10.300a5.200 5.200 0 1 0-4.300 8h6.800" fill="none" stroke="#e0231c" stroke-width="2.300"/><path d="M19.500 12.500a2.600 2.600 0 1 0-2.600 3.300h6.600" fill="none" stroke="#e0231c" stroke-width="1"/></svg>
<!-- snipping + monitor -->
<svg style="left:776px;top:802px" width="30" height="28" viewBox="0 0 30 28"><ellipse cx="12" cy="9" rx="9" ry="6" fill="#d8c8c4"/><ellipse cx="12" cy="8" rx="6" ry="3.500" fill="#c05048"/><path d="M14 10l10 14M22 10L12 24" stroke="#3a98c8" stroke-width="2.500"/></svg>
<svg style="left:835px;top:802px" width="28" height="28" viewBox="0 0 28 28"><rect x="3" y="2" width="22" height="17" rx="1" fill="#e6ecf0" stroke="#aab4bc"/><rect x="5" y="4" width="18" height="12" fill="#bcd8ee"/><path d="M6 12l3-4 3 5 3-6 3 4 4-3" fill="none" stroke="#4a8ac0" stroke-width="1"/><path d="M10 19h8l2 5H8z" fill="#d9dde0"/><ellipse cx="14" cy="25" rx="8" ry="2" fill="#e8eaec"/></svg>
<!-- tray -->
<svg style="left:1244px;top:806px" width="170" height="22" viewBox="0 0 170 22">
 <path d="M2 13.500l4-4.500 4 4.500z" fill="#fff" stroke="#888" stroke-width=".5"/>
 <g fill="#fff" stroke="#555" stroke-width=".6"><path d="M25.500 3l3.800 2.500-3.800 2.500-3.800-2.500zM33 3l3.800 2.500L33 8l-3.800-2.500zM25.500 8.500l3.800 2.500-3.800 2.500-3.800-2.500zM33 8.500l3.800 2.500-3.800 2.500-3.800-2.500zM29.300 12.500l3.200 2.200-3.200 2.200-3.200-2.200z"/></g>
 <rect x="45" y="3" width="14" height="14" rx="1.500" fill="#e0342c"/><path d="M48 7.500c2-1 6-1 8 0-.5 3.500-2 5.500-4 7-2-1.500-3.500-3.500-4-7z" fill="none" stroke="#fff" stroke-width="1.200"/><circle cx="57" cy="15.500" r="2.200" fill="#7ac6ea" stroke="#fff" stroke-width=".6"/>
 <rect x="68" y="4" width="13" height="12" rx="1" fill="#dde6ee" stroke="#7a8a9a" stroke-width=".7"/><rect x="68.500" y="4.500" width="12" height="3" fill="#5a8ac8"/><circle cx="77.500" cy="14" r="3.200" fill="#d83a3a" stroke="#fff" stroke-width=".6"/><path d="M77.500 12v3.200M76 14l1.500 1.600L79 14" stroke="#fff" stroke-width=".8" fill="none"/>
 <path d="M91.500 3v15" stroke="#fff" stroke-width="1.500"/><path d="M92.500 4c3-1.200 4.500 1.300 11 2.500-3 2-6 1.200-11 3.200z" fill="#fff" stroke="#666" stroke-width=".5"/>
 <g transform="translate(4.500 0)" stroke="#555" stroke-width=".5" fill="#fff"><rect x="116" y="5" width="7" height="13" rx="1"/><rect x="118" y="3" width="3" height="2"/><path d="M109 3v4M113 3v4" stroke="#fff" stroke-width="1.200"/><rect x="108" y="7" width="6" height="5" rx="1"/><path d="M111 12v6" stroke="#fff" stroke-width="1.200"/></g>
 <g transform="translate(5.500 0)" fill="#fff" stroke="#555" stroke-width=".5"><rect x="134" y="6" width="12" height="9" rx=".8"/><rect x="136" y="8" width="8" height="5" fill="#c8b888"/><rect x="138" y="15" width="4" height="2"/><rect x="135" y="17" width="10" height="1.500"/><rect x="129" y="3" width="4" height="7" rx="2"/><path d="M131 10v6h3" fill="none" stroke="#fff" stroke-width="1"/></g>
 <path d="M160 9h3l4-3.500v11L163 13h-3z" fill="#fff" stroke="#555" stroke-width=".5"/>
</svg>

</div>

</div>

<!-- ================= OVERLAYS ================= -->
<!-- tooltip -->
<div class="a" style="left:720px;top:740px;width:340px;height:74px;border-radius:9px;border:2px solid rgba(255,255,255,.95)"></div>
<svg style="left:792px;top:812px" width="24" height="11" viewBox="0 0 24 11"><path d="M0 0h23L11.500 10.500z" fill="rgba(255,255,255,.95)"/><path d="M3.200 -1h16.600v1L11.500 7.800 3.200 0z" fill="#20170d"/></svg>
<div class="a" style="left:722px;top:742px;width:336px;height:70px;border-radius:7px;background:linear-gradient(rgba(26,26,26,.965) 0,rgba(26,26,26,.965) 77%,rgba(12,6,3,.9) 79%,rgba(12,6,3,.9) 100%)"></div>

<div class="t" style="left:730px;top:750px;font-size:11.300px;color:#fff;-webkit-text-stroke:.38px #fff;letter-spacing:.22px;line-height:15px;white-space:normal;width:320px">Позвоните по групповой видеосвязи. Это совершенно бесплатно.</div>
<div class="a" style="left:1034px;top:788px;width:16px;height:16px;border-radius:50%;background:#fff;border:1px solid #d0d0d0"></div>
<svg style="left:1038.500px;top:792.500px" width="7" height="7" viewBox="0 0 7 7"><path d="M1 1l5 5M6 1l-5 5" stroke="#1473ae" stroke-width="1.600"/></svg>

<!-- picture in picture 1410..1538 x 772..900 -->
<svg style="left:1410px;top:772px" width="128" height="128" viewBox="0 0 128 128">
 <defs>
  <linearGradient id="sky" x1="0" y1="0" x2="0" y2="1"><stop offset="0" stop-color="#c4c4c4"/><stop offset="1" stop-color="#dedede"/></linearGradient>
  <linearGradient id="pv" x1="0" y1="0" x2="0" y2="1"><stop offset="0" stop-color="#7c7c7c"/><stop offset="1" stop-color="#5e5e5e"/></linearGradient>
  <pattern id="st" width="8" height="3.600" patternUnits="userSpaceOnUse" patternTransform="rotate(-6)"><rect width="8" height="3.600" fill="#d6d6d6"/><rect y="2" width="8" height="1.600" fill="#5a5a5a"/></pattern>
  <clipPath id="pc"><rect width="128" height="128"/></clipPath><filter id="bl2" x="-2%" y="-2%" width="104%" height="104%"><feGaussianBlur stdDeviation=".55"/></filter>
 </defs>
 <g clip-path="url(#pc)"><g id="pipscene" filter="url(#bl2)">
 <rect width="128" height="128" fill="url(#pv)"/>
 <rect width="128" height="30" fill="url(#sky)"/>
 <path d="M0 28l10-1 12 1 8-3 8-2v-6h8v8l6 2v10L0 40z" fill="#9a9a9a"/>
 <path d="M0 33l36 1 4 6-40 12z" fill="#c6c6c6"/>
 <path d="M0 50l42-12 10 0-52 30z" fill="#6a6a6a"/>
 <path d="M0 62l40-22h14L0 128z" fill="#6f6f6f"/>
 <path d="M93 0h35v22H90V6z" fill="#2e2e2e"/>
 <path d="M86 20c6-4 12-2 16-6 6-2 16-2 26 0v40l-42-12z" fill="#1d1d1d"/>
 <path d="M82 40l46 8v10l-46-14z" fill="#2a2a2a"/>
 <path d="M80 44l48 26v58H70z" fill="#5b5b5b"/>
 <path d="M84 46l44 24v3L83 48z" fill="#484848"/>
 <g fill="#2e2e2e"><rect x="6" y="58" width="2" height="7"/><rect x="10" y="60" width="2" height="7"/><rect x="19" y="48" width="1.600" height="5"/><rect x="27" y="44" width="1.500" height="5"/><rect x="33" y="46" width="1.500" height="4"/><rect x="94" y="41" width="1.600" height="5"/><rect x="99" y="42" width="1.600" height="5"/></g>
 <!-- woman -->
 <path d="M48 128c-2-20-4-40-8-54l-3-5c4-6 12-10 20-13l18-4 12 6c4 3 6 8 6 14-2 14-1 30 3 56z" fill="url(#st)"/>
 <path d="M37 69l9 7c-3 14-5 34-4 52H24c3-20 6-44 13-59z" fill="#7e7e7e"/>
 <path d="M62 44h18l2 12-10 14-12-14z" fill="#8a8a8a"/>
 <path d="M57 18c4-8 18-12 27-4 5 6 6 16 4 26l-3 8c-3 6-9 9-14 9-7 0-12-6-14-16-1-8-2-16 0-23z" fill="#9a9a9a"/>
 <path d="M55 30c-2-14 6-22 17-22 12 0 20 8 19 24l-1 8-3-14c-6 2-14-2-18-8-3 6-8 10-12 10z" fill="#3c3c3c"/>
 <path d="M66 10c4 4 4 12 0 18M74 9c5 5 6 12 3 18" stroke="#777" stroke-width="1.200" fill="none"/>
 <path d="M84 46c4 3 6 8 4 14-3-1-5-5-6-9z" fill="#333"/>
 <path d="M60 28h11c1 0 2 .5 3 .5s2-.5 3-.5h10v5c-1 3-3 4-6 4-3 0-5-2-6-5h-2c-1 3-3 5-6 5-4 0-6-2-7-5z" fill="#121212"/>
 <path d="M67 44c3 2 8 2 12-1-1 3-4 4.500-6.500 4.500S68 46 67 44z" fill="#e2e2e2"/>
 </g></g>
</svg>


<!-- ================= WINDOWS TASKBAR ================= -->
<div id="wtb" class="a">
<!-- coords relative to (1538,0), width 62 -->
<div class="a" style="left:0;top:0;width:62px;height:900px;background:linear-gradient(160deg,rgba(40,60,66,.18) 0,rgba(10,24,30,0) 14%,rgba(30,50,56,.14) 22%,rgba(8,20,26,0) 34%)"></div>
<svg style="left:22px;top:12px" width="17" height="17" viewBox="0 0 17 17" fill="#fff"><path d="M0 2.300l7-1v6.900H0zM8 1.200L17 0v8.200H8zM0 9.100h7v6.600l-7-1zM8 9.100h9V17l-9-1.200z"/></svg>
<svg style="left:22px;top:51px" width="17" height="17" viewBox="0 0 17 17" fill="none" stroke="#fff" stroke-width="1.300"><circle cx="10.500" cy="6.500" r="4.600"/><path d="M7.200 9.800L1 16"/></svg>
<svg style="left:21px;top:92px" width="21" height="16" viewBox="0 0 21 16" fill="none" stroke="#fff" stroke-width="1.300"><rect x="5" y="1" width="11" height="13.500"/><path d="M3 3.500H1v9h2M18 3.500h2v9h-2"/></svg>
<!-- explorer -->
<svg style="left:20px;top:136px" width="22" height="19" viewBox="0 0 22 19"><path d="M0.500 1.500h7l1.500 1.800h12.500V17H0.500z" fill="#f2c84a"/><path d="M0.500 4.500h21V17H0.500z" fill="#fbe28a"/><path d="M4 11h14v7h-3.500v-4h-7v4H4z" fill="#3aa0e6"/></svg>
<div class="a" style="left:58px;top:127px;width:4px;height:38px;background:#76b9ed"></div>
<!-- edge -->
<svg style="left:20px;top:181px" width="23" height="23" viewBox="0 0 23 23"><path d="M1 10.500C2 4.500 6.500 1 12 1c6 0 10 4.200 10 10v2.200H8.200c.3 3 2.600 4.800 6 4.800 2.400 0 4.600-.7 6.400-1.800v4.600c-2 1.100-4.600 1.700-7.400 1.700-6.300 0-10.300-3.600-10.300-9.300 0-3.500 1.800-6.500 4.700-8.200C5 6 2.500 7.800 1 10.500zM8.300 9.500h8c-.1-2.600-1.600-4.200-4-4.200-2.200 0-3.700 1.700-4 4.200z" fill="#0a78d6"/></svg>
<!-- booking -->
<div class="a" style="left:19px;top:228px;width:24px;height:24px;border-radius:3px;background:#1d3d7c"></div>
<div class="t" style="left:24px;top:231px;font-size:15px;font-weight:bold;color:#fff;line-height:18px">B</div>
<div class="a" style="left:36px;top:244px;width:3px;height:3px;border-radius:50%;background:#2ea4e0"></div>
<!-- opera -->
<div class="a" style="left:0;top:268px;width:62px;height:38px;background:#8a191c"></div>
<div class="a" style="left:59px;top:268px;width:3px;height:38px;background:#e8202a"></div>
<svg style="left:19px;top:275px" width="24" height="24" viewBox="0 0 24 24"><defs><linearGradient id="og" x1="0" y1="0" x2="0" y2="1"><stop offset="0" stop-color="#ff2a3a"/><stop offset="1" stop-color="#a80010"/></linearGradient></defs><circle cx="12" cy="12" r="11.500" fill="url(#og)"/><ellipse cx="12" cy="12" rx="5" ry="8.200" fill="#8a191c"/></svg>
<!-- mail -->
<svg style="left:19px;top:324px" width="25" height="20" viewBox="0 0 25 20" fill="#fff"><path d="M0.500 6L12.500 0.500 24.500 6v13h-24z"/><path d="M0.500 6.500l17 7-6-5.500 13-1.500-12-6z" fill="#06151b" opacity="0"/><path d="M1 7l14 3.500-3.500 3.500 13-7.500z" fill="#06151b"/></svg>
<!-- store -->
<svg style="left:19px;top:369px" width="24" height="24" viewBox="0 0 24 24"><path d="M7.500 7V5.500c0-2.500 2-4.500 4.500-4.500s4.500 2 4.500 4.500V7" fill="none" stroke="#fff" stroke-width="1.200"/><rect x="0.500" y="6.500" width="23" height="17" rx="1" fill="#fff"/><rect x="7" y="10" width="4.500" height="4.500" fill="#f25022"/><rect x="12.500" y="10" width="4.500" height="4.500" fill="#7fba00"/><rect x="7" y="15.500" width="4.500" height="4.500" fill="#00a4ef"/><rect x="12.500" y="15.500" width="4.500" height="4.500" fill="#ffb900"/></svg>
<!-- skype active -->
<div class="a" style="left:0;top:405px;width:62px;height:45px;background:#34464d"></div>
<div class="a" style="left:59.500px;top:405px;width:2.500px;height:45px;background:#76b9ed"></div>
<svg style="left:19px;top:416px" width="24" height="24" viewBox="0 0 24 24"><path d="M12 1.200c5.800 0 10.500 4.500 10.500 10.300 0 .7-.1 1.500-.2 2.200.7 1 1.100 2.300 1.100 3.600 0 3.600-2.900 6.500-6.500 6.500-1.200 0-2.400-.3-3.300-.9-.5.100-1 .1-1.600.1C6.200 23 1.500 18.400 1.500 12.700c0-.8.100-1.500.2-2.200C1 9.500.6 8.200.6 6.900.6 3.300 3.500.4 7.100.4c1.300 0 2.400.4 3.400 1 .5-.1 1-.2 1.500-.2z" fill="#12a5e8"/><text x="12" y="18.300" font-family="Liberation Sans" font-weight="bold" font-size="17" fill="#fff" text-anchor="middle">S</text></svg>
<!-- paint -->
<svg style="left:18px;top:463px" width="26" height="25" viewBox="0 0 26 25"><path d="M10 7c6-2 12 .8 12 6.500 0 5-5 8-11 8-3.300 0-4-1.600-3.300-3.300.8-1.800-.8-2.800-3.200-2.800C1.500 15.400.700 13.500 2.800 11c1.600-2 4-3.200 7.200-4z" fill="#cfe3f0" stroke="#9ab8cc" stroke-width=".8"/><circle cx="6.500" cy="12" r="1.600" fill="#e0483a"/><circle cx="10" cy="9.300" r="1.600" fill="#4caf50"/><circle cx="14.500" cy="9" r="1.600" fill="#f5c518"/><circle cx="13" cy="17" r="1.800" fill="#9ab"/><path d="M21.500 2.500L13 21l1.800.8L23.300 3.300z" fill="#e89a3c"/><path d="M21 1l3.500 1.200-1 3-2.800-1.200z" fill="#d8b89a"/></svg>
<div class="a" style="left:59.500px;top:456px;width:2.500px;height:38px;background:#76b9ed"></div>
<!-- word -->
<svg style="left:20px;top:510px" width="23" height="23" viewBox="0 0 23 23"><rect x="10" y="3.500" width="12" height="16" fill="#fff" stroke="#2a5699" stroke-width=".8"/><path d="M13.500 6.500h7M13.500 8.500h7M13.500 10.500h7M13.500 12.500h7M13.500 14.500h7M13.500 16.500h7" stroke="#2a5699" stroke-width=".9"/><path d="M0.500 3L13 0.500v22L0.500 20z" fill="#2a5699"/><text x="6.800" y="15" font-family="Liberation Sans" font-weight="bold" font-size="9.500" fill="#fff" text-anchor="middle">W</text></svg>
<div class="a" style="left:59.500px;top:503px;width:2.500px;height:38px;background:#76b9ed"></div>
<!-- tray -->
<svg style="left:12px;top:698px" width="9" height="13" viewBox="0 0 9 13"><path d="M7.500 1L1.500 6.500l6 5.500" fill="none" stroke="#fff" stroke-width="1.300"/></svg>
<div class="a" style="left:9px;top:720px;width:16px;height:16px;background:#e21a23"></div>
<svg style="left:10px;top:722px" width="14" height="12" viewBox="0 0 14 12"><path d="M1.500 9c1.500-4 4-7.500 7-7.500 2.500 0 3.500 2.500 1.500 4.500-1.200 1.200-3.500 2-5.500 1.500M8 6.500l4.500 4.500" fill="none" stroke="#fff" stroke-width="1.600" stroke-linecap="round"/></svg>
<svg style="left:33px;top:721px" width="17" height="14" viewBox="0 0 17 14" fill="none" stroke="#fff" stroke-width="1"><path d="M1 5h2.500L7 1.500v11L3.500 9H1z"/><path d="M9.500 4.500c1 1.500 1 3.500 0 5M11.800 3c1.700 2.500 1.700 5.500 0 8M14.200 1.500c2.300 3.500 2.300 7.500 0 11"/></svg>
<svg style="left:10px;top:746px" width="16" height="11" viewBox="0 0 16 11"><rect x="0.700" y="1.200" width="12.800" height="8.200" fill="none" stroke="#fff" stroke-width="1.200"/><rect x="14" y="3.500" width="1.500" height="3.600" fill="#fff"/><rect x="2.500" y="3" width="8.500" height="4.600" fill="#fff"/></svg>
<svg style="left:35px;top:745px" width="14" height="14" viewBox="0 0 14 14" fill="none" stroke="#fff" stroke-width="1.200"><path d="M1 13C1 6.400 6.400 1 13 1M4.500 13c0-4.700 3.800-8.500 8.500-8.500M8 13c0-2.800 2.200-5 5-5"/><circle cx="11.800" cy="11.800" r="1.400" fill="#fff" stroke="none"/></svg>
<div class="t" style="left:0;top:773px;width:62px;text-align:center;font-size:12px;color:#fff">РУС</div>
<div class="t" style="left:0;top:811px;width:62px;text-align:center;font-size:12px;color:#fff;letter-spacing:-.3px">10:20</div>
<div class="t" style="left:0;top:828px;width:62px;text-align:center;font-size:12px;color:#fff;letter-spacing:-.35px">20.12.2017</div>
<svg style="left:22px;top:862px" width="26" height="26" viewBox="0 0 26 26"><path d="M1 1h16v12.500H8.500L5 17.500v-4H1z" fill="#fff"/><path d="M3.500 4h11M3.500 6.500h11M3.500 9h11" stroke="#06151b" stroke-width="1"/><circle cx="16.300" cy="16" r="7.500" fill="#1c2226" stroke="#5a6266" stroke-width="1"/><text x="16.300" y="20.300" font-family="Liberation Sans" font-size="12" fill="#fff" text-anchor="middle">1</text></svg>
<div class="a" style="left:0;top:895px;width:62px;height:1px;background:#555f63"></div>

</div>

</div>
</body>
</html>
